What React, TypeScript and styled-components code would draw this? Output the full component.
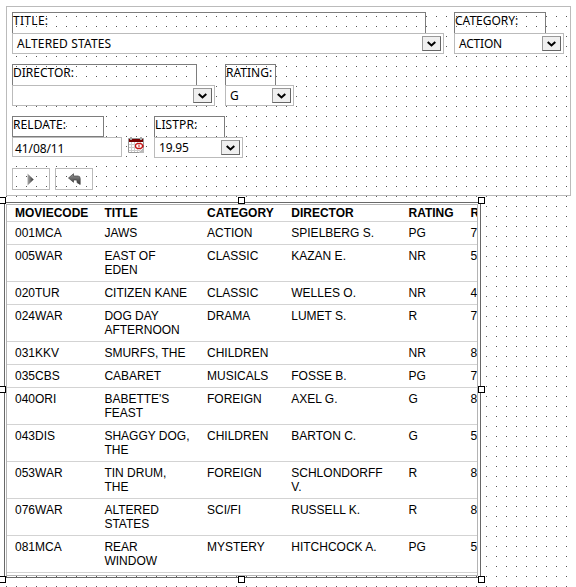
import React from 'react';
import styled, { createGlobalStyle } from 'styled-components';

const GlobalStyle = createGlobalStyle`
  html, body { margin: 0; padding: 0; background: #fff; overflow: hidden; }
  * { box-sizing: border-box; }
`;

/* Design surface with a one-pixel snap dot every ten pixels */
const Surface = styled.main`
  position: relative;
  width: 576px;
  height: 587px;
  padding: 6px 0 0 4px;
  overflow: hidden;
  background-color: #fff;
  background-image: linear-gradient(#fff, #fff), linear-gradient(#fff, #fff),
    linear-gradient(90deg, transparent 1px, #fff 1px),
    linear-gradient(#555 1px, #fff 1px);
  background-size: 576px 6px, 6px 580px, 10px 10px, 10px 10px;
  background-position: 0 0, 0 0, 6px 6px, 6px 6px;
  background-repeat: no-repeat, no-repeat, repeat, repeat;
  color: #000;
`;

const FormPanel = styled.form`
  display: flex;
  flex-direction: column;
  width: 565px;
  height: 190px;
  margin-left: 2px;
  padding: 5px;
  border: 1px solid #bbb;
  font: 12px/15px "Noto Sans", "Open Sans", sans-serif;
`;

const FormRow = styled.div<{ $height: number }>`
  display: flex;
  align-items: flex-start;
  height: ${(p) => p.$height}px;
`;

const Field = styled.div<{ $width: number; $gap: number }>`
  width: ${(p) => p.$width}px;
  margin-right: ${(p) => p.$gap}px;
  flex: none;
`;

const Label = styled.label<{ $width: number; $closed?: boolean }>`
  display: block;
  width: ${(p) => p.$width}px;
  height: 21px;
  border: 1px solid #7d7d7d;
  border-bottom-width: ${(p) => (p.$closed ? 1 : 0)}px;
  white-space: nowrap;
`;

const Text = styled.span<{ $spacing: number }>`
  display: inline-block;
  letter-spacing: ${(p) => p.$spacing}px;
  white-space: nowrap;
`;

const SelectBox = styled.div`
  display: flex;
  justify-content: space-between;
  height: 21px;
  padding: 2px 2px 2px 4px;
  border: 1px solid #bbb;
  background: #fff;
`;

const ArrowButton = styled.span`
  display: flex;
  width: 19px;
  height: 15px;
  align-items: center;
  justify-content: center;
  border: 1px solid #999;
  border-right-color: #666;
  border-bottom-color: #666;
  background: #efefef;
`;

const DateInput = styled.div`
  height: 20px;
  padding: 3px 2px;
  border: 1px solid #bbb;
  background: #fff;
`;

const CalendarButton = styled.span`
  width: 16px;
  height: 16px;
  margin: 21px 10px 0 0;
  flex: none;
  svg { display: block; }
`;

const ToolButton = styled.span`
  display: flex;
  align-items: center;
  justify-content: center;
  width: 38px;
  height: 22px;
  margin-right: 5px;
  border: 1px solid #bbb;
`;

const SelectionFrame = styled.section`
  position: relative;
  width: 477px;
  height: 376px;
  margin-top: 6px;
  padding: 1px 2px 1px 1px;
  border: 1px solid #686868;
`;

const Handle = styled.i<{ $left: number; $top: number }>`
  position: absolute;
  left: ${(p) => p.$left}px;
  top: ${(p) => p.$top}px;
  width: 7px;
  height: 7px;
  border: 1px solid #000;
  background: #fff;
`;

const Grid = styled.div`
  width: 472px;
  height: 372px;
  overflow: hidden;
  border: 1px solid #b4b4b4;
  background: #fff;
  font: 12px/14px "Liberation Sans", Arial, sans-serif;
`;

const GridRow = styled.div<{ $head?: boolean }>`
  display: grid;
  grid-template-columns: 89.4px 102.6px 84.3px 117.2px 62px 60px;
  width: 523.5px;
  padding: ${(p) => (p.$head ? '1px 0 1px 8px' : '4px 0 4px 8px')};
  border-bottom: 1px solid #d3d3d3;
  font-weight: ${(p) => (p.$head ? 700 : 400)};
  white-space: pre-line;
`;

const Chevron = () => (
  <ArrowButton>
    <svg width="9" height="6" viewBox="0 0 9 6">
      <path d="M.7 .9 4.5 4.4 8.3 .9" fill="none" stroke="#000" strokeWidth="2" />
    </svg>
  </ArrowButton>
);

interface SelectProps {
  label: string;
  labelWidth: number;
  labelSpacing?: number;
  value: string;
  valueSpacing?: number;
  width: number;
  gap?: number;
}

const SelectField = ({ label, labelWidth, labelSpacing = 0, value, valueSpacing = 0, width, gap = 0 }: SelectProps) => (
  <Field $width={width} $gap={gap}>
    <Label $width={labelWidth}><Text $spacing={labelSpacing}>{label}</Text></Label>
    <SelectBox>
      <Text $spacing={valueSpacing}>{value}</Text>
      <Chevron />
    </SelectBox>
  </Field>
);

const CalendarIcon = () => (
  <svg width="16" height="16" viewBox="0 0 16 16">
    <path d="M.5 1.5h15v10l-4 4H.5z" fill="#fff" stroke="#999" />
    <path d="M1 7.5h14M1 10.5h14M1 13.5h11M3.5 5v10M6.5 5v10M9.5 5v10M12.5 5v8" stroke="#ccc" />
    <path d="M1 2h14v3H1z" fill="#760000" />
    <path d="M2 0h2v3H2zM12 0h2v3h-2z" fill="#aaa" />
    <path d="m11 15 5-4v5h-5z" fill="#bbb" />
    <ellipse cx="11" cy="9" rx="3.5" ry="2.6" fill="#fff" stroke="#c51414" strokeWidth="1.3" />
    <path d="M11 7.5v3M14 9h2" stroke="#c51414" />
  </svg>
);

const PlayIcon = () => (
  <svg width="9" height="13" viewBox="0 0 9 13">
    <defs>
      <linearGradient id="play" x2="1"><stop stopColor="#aaa" /><stop offset="1" stopColor="#333" /></linearGradient>
    </defs>
    <path d="M.5 .5 6.7 6.5 .5 12.5z" fill="url(#play)" />
  </svg>
);

const UndoIcon = () => (
  <svg width="13" height="12" viewBox="0 0 13 12">
    <defs>
      <linearGradient id="undo" x2="0" y2="1"><stop stopColor="#999" /><stop offset="1" stopColor="#333" /></linearGradient>
    </defs>
    <path d="M.5 5 5.5 .7V3H10q2.2 0 2.2 2.5v6L9 9.6V7.8Q9 7 8 7H5.5v2.3z" fill="url(#undo)" stroke="#444" strokeWidth=".7" />
  </svg>
);

const columns = ['MOVIECODE', 'TITLE', 'CATEGORY', 'DIRECTOR', 'RATING', 'R'];
const movies = [
  ['001MCA', 'JAWS', 'ACTION', 'SPIELBERG S.', 'PG', '7'],
  ['005WAR', 'EAST OF\nEDEN', 'CLASSIC', 'KAZAN E.', 'NR', '5'],
  ['020TUR', 'CITIZEN KANE', 'CLASSIC', 'WELLES O.', 'NR', '4'],
  ['024WAR', 'DOG DAY\nAFTERNOON', 'DRAMA', 'LUMET S.', 'R', '7'],
  ['031KKV', 'SMURFS, THE', 'CHILDREN', '', 'NR', '8'],
  ['035CBS', 'CABARET', 'MUSICALS', 'FOSSE B.', 'PG', '7'],
  ['040ORI', "BABETTE'S\nFEAST", 'FOREIGN', 'AXEL G.', 'G', '8'],
  ['043DIS', 'SHAGGY DOG,\nTHE', 'CHILDREN', 'BARTON C.', 'G', '5'],
  ['053WAR', 'TIN DRUM,\nTHE', 'FOREIGN', 'SCHLONDORFF\nV.', 'R', '8'],
  ['076WAR', 'ALTERED\nSTATES', 'SCI/FI', 'RUSSELL K.', 'R', '8'],
  ['081MCA', 'REAR\nWINDOW', 'MYSTERY', 'HITCHCOCK A.', 'PG', '5'],
];

/* Handle offsets are measured from the inside of the selection border */
const handles = [
  [-6, -6], [233, -6], [473, -6],
  [-6, 183], [473, 183],
  [-6, 373], [233, 373], [473, 373],
];

export default function App() {
  return (
    <>
      <GlobalStyle />
      <Surface>
        <FormPanel>
          <FormRow $height={52}>
            <SelectField label="TITLE:" labelWidth={414} labelSpacing={0.3} value="ALTERED STATES" valueSpacing={0.15} width={432} gap={10} />
            <SelectField label="CATEGORY:" labelWidth={92} value="ACTION" valueSpacing={-0.2} width={110} />
          </FormRow>
          <FormRow $height={52}>
            <SelectField label="DIRECTOR:" labelWidth={185} value="" width={203} gap={10} />
            <SelectField label="RATING:" labelWidth={51} value="G" width={69} />
          </FormRow>
          <FormRow $height={52}>
            <Field $width={110} $gap={6}>
              <Label $width={92} $closed><Text $spacing={0.1}>RELDATE:</Text></Label>
              <DateInput><Text $spacing={-0.1}>41/08/11</Text></DateInput>
            </Field>
            <CalendarButton><CalendarIcon /></CalendarButton>
            <SelectField label="LISTPR:" labelWidth={71} labelSpacing={0.1} value="19.95" valueSpacing={-0.2} width={89} />
          </FormRow>
          <FormRow $height={22}>
            <ToolButton><PlayIcon /></ToolButton>
            <ToolButton><UndoIcon /></ToolButton>
          </FormRow>
        </FormPanel>
        <SelectionFrame>
          <Grid>
            <GridRow $head>{columns.map((c) => <span key={c}>{c}</span>)}</GridRow>
            {movies.map((m) => (
              <GridRow key={m[0]}>{m.map((v, i) => <span key={i}>{v}</span>)}</GridRow>
            ))}
          </Grid>
          {handles.map(([x, y]) => <Handle key={`${x},${y}`} $left={x} $top={y} />)}
        </SelectionFrame>
      </Surface>
    </>
  );
}
